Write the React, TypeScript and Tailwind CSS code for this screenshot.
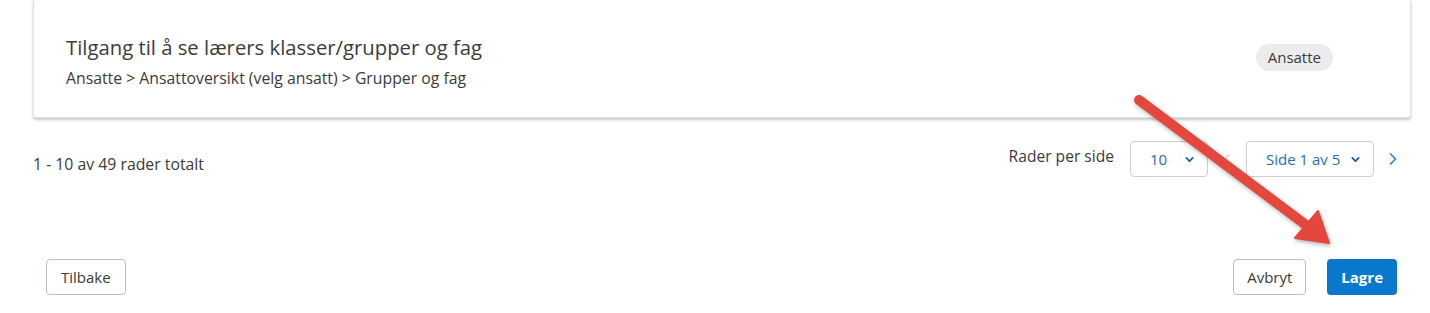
import { ChevronDown, ChevronLeft, ChevronRight } from 'lucide-react';

const font = { fontFamily: '"Open Sans", "Liberation Sans", sans-serif' };

function PageSelect({ value, width }: { value: string; width: string }) {
  return (
    <div className={`${width} h-9 flex items-center justify-between pl-[19px] pr-[11px] border border-[#ccd0d4] rounded-[4px] bg-white text-[15px] text-[#2a6db0]`}>
      <span>{value}</span>
      <ChevronDown size={13} strokeWidth={3.2} className="text-[#1f5f8f]" />
    </div>
  );
}

export default function App() {
  return (
    <div className="relative w-[1430px] h-[313px] bg-white text-[#333] overflow-hidden" style={font}>
      {/* Kort */}
      <div className="ml-[33px] mr-[19px] bg-white border-x border-b border-[#e2e2e2] rounded-b-[3px] shadow-[0_2px_3px_rgba(0,0,0,0.22)]">
        <div className="flex items-start justify-between pl-8 pr-[77px] pt-[33px] pb-[28px]">
          <div>
            <h2 className="text-[20.3px] leading-7 text-[#3b3b3b]">Tilgang til å se lærers klasser/grupper og fag</h2>
            <p className="mt-[6px] text-[15.8px] leading-[22px] text-[#3b3b3b]">Ansatte &gt; Ansattoversikt (velg ansatt) &gt; Grupper og fag</p>
          </div>
          <span className="mt-[11px] h-[27px] px-[12px] flex items-center rounded-full bg-[#ececec] text-[15px] text-[#3b3b3b]">Ansatte</span>
        </div>
      </div>

      {/* Paginering */}
      <div className="mt-[23px] ml-[33px] mr-[18px] flex items-start justify-between">
        <span className="mt-[12px] text-[15.8px] leading-[22px] text-[#3b3b3b]">1 - 10 av 49 rader totalt</span>
        <div className="flex items-start">
          <span className="mt-[4px] text-[15.6px] leading-[22px] text-[#3b3b3b]">Rader per side</span>
          <div className="ml-4">
            <PageSelect value="10" width="w-[78px]" />
          </div>
          <div className="w-[38px] h-9 flex items-center justify-center">
            <ChevronLeft size={18} strokeWidth={1.5} className="text-[#d0d0d0]" />
          </div>
          <PageSelect value="Side 1 av 5" width="w-[128px]" />
          <div className="w-[38px] h-9 flex items-center justify-center">
            <ChevronRight size={20} strokeWidth={2} className="text-[#1e86d2]" />
          </div>
        </div>
      </div>

      {/* Knapper */}
      <div className="mt-[82px] ml-[46px] mr-[33px] flex items-center justify-between">
        <button className="h-9 px-[14px] border border-[#b9bec4] rounded-[4px] bg-white text-[15px] text-[#3b3b3b]">Tilbake</button>
        <div className="flex items-center gap-[21px]">
          <button className="h-9 px-[13px] border border-[#b9bec4] rounded-[4px] bg-white text-[15px] text-[#3b3b3b]">Avbryt</button>
          <button className="h-9 px-[14px] rounded-[4px] bg-[#0a78cc] text-[15px] font-bold text-white">Lagre</button>
        </div>
      </div>

      {/* Rød pil */}
      <svg className="absolute inset-0 pointer-events-none" width="1430" height="313" style={{ filter: 'drop-shadow(1px 2px 2px rgba(0,0,0,0.3))' }}>
        <line x1="1139" y1="100" x2="1306" y2="225" stroke="#e5473d" strokeWidth="10" strokeLinecap="round" />
        <polygon points="1329,243 1295,238 1318,211" fill="#e5473d" stroke="#e5473d" strokeWidth="2" strokeLinejoin="round" />
      </svg>
    </div>
  );
}
